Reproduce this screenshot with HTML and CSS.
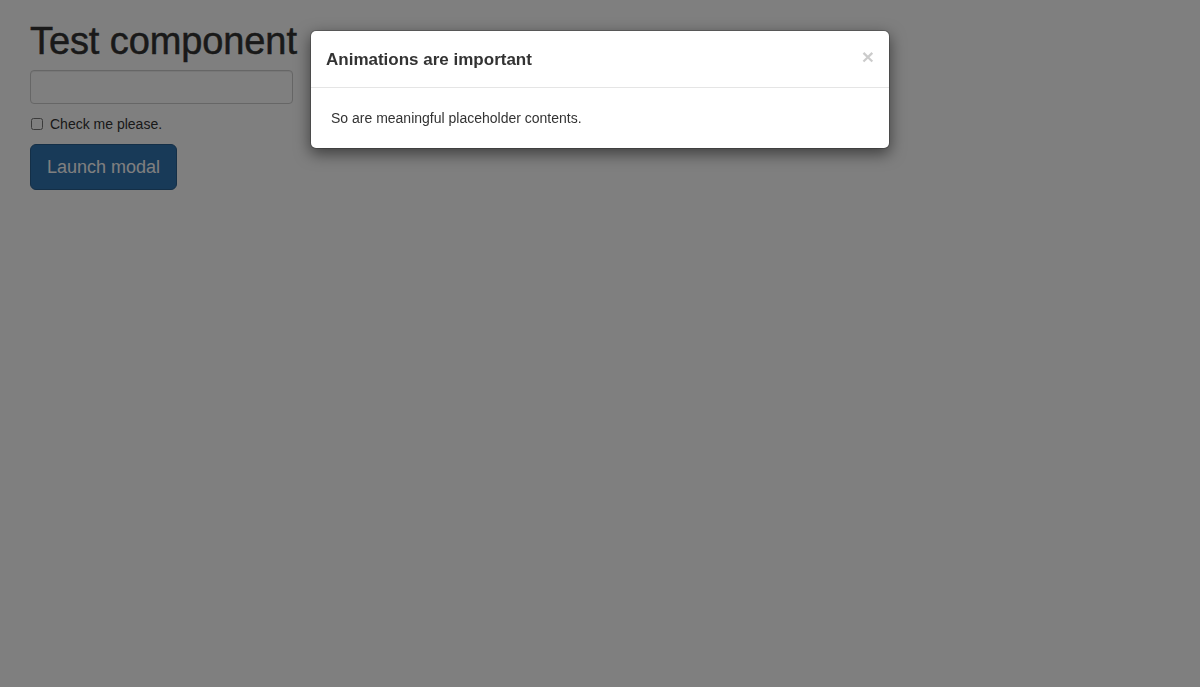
FILE: index.html
```html
<!DOCTYPE html>
<html lang="en">
<head>
<meta charset="utf-8">
<title>Test component</title>
<link rel="stylesheet" href="styles.css">
</head>
<body>
<div class="page">
  <h1 class="title">Test component</h1>
  <input class="field" type="text">
  <label class="check"><input type="checkbox" class="check-box"><span>Check me please.</span></label>
  <button class="btn-launch" type="button">Launch modal</button>
</div>
<div class="backdrop"></div>
<div class="modal">
  <div class="modal-header">
    <h4 class="modal-title">Animations are important</h4>
    <span class="close">&times;</span>
  </div>
  <div class="modal-body">So are meaningful placeholder contents.</div>
</div>
</body>
</html>
```

FILE: styles.css
```css
* { box-sizing: border-box; }
html, body { margin: 0; height: 100%; }
body {
  font-family: "Liberation Sans", Arial, Helvetica, sans-serif;
  font-size: 14px;
  line-height: 1.42857;
  color: #333;
  background: #fff;
  overflow: hidden;
}
.page {
  padding: 21px 30px;
  display: flex;
  flex-direction: column;
  align-items: flex-start;
}
.title {
  margin: 0;
  font-size: 38px;
  font-weight: 500;
  line-height: 41px;
  color: #333;
  letter-spacing: -0.1px;
  -webkit-text-stroke: 0.5px #333;
}
.field {
  margin-top: 8px;
  width: 263px;
  height: 34px;
  border: 1px solid #ccc;
  border-radius: 4px;
  background: #fff;
  box-shadow: inset 0 1px 1px rgba(0,0,0,.075);
}
.check {
  margin-top: 10px;
  display: flex;
  align-items: center;
  gap: 7px;
  font-size: 14px;
  line-height: 20px;
}
.check-box { margin: 0 0 0 1px; width: 12px; height: 12px; }
.btn-launch {
  margin-top: 10px;
  font-family: inherit;
  font-size: 18px;
  line-height: 24px;
  padding: 10px 16px;
  border: 1px solid #285e8e;
  border-radius: 6px;
  background: #3174b0;
  color: #fff;
}
.backdrop {
  position: fixed;
  inset: 0;
  background: rgba(0,0,0,.5);
}
.modal {
  position: absolute;
  left: 310px;
  top: 30px;
  width: 580px;
  background: #fff;
  border: 1px solid rgba(0,0,0,.2);
  border-radius: 6px;
  box-shadow: 0 5px 15px rgba(0,0,0,.5);
  background-clip: padding-box;
}
.modal-header {
  display: flex;
  justify-content: space-between;
  align-items: flex-start;
  padding: 16px 15px 15px 15px;
  border-bottom: 1px solid #e5e5e5;
}
.modal-title {
  margin: 0;
  font-size: 17px;
  font-weight: 700;
  line-height: 25px;
  color: #333;
}
.close {
  font-size: 21px;
  font-weight: 700;
  line-height: 1;
  color: #000;
  opacity: .2;
  margin-top: -1px;
  margin-right: 0;
}
.modal-body {
  padding: 20px 19px 20px 20px;
  line-height: 20px;
}
```
